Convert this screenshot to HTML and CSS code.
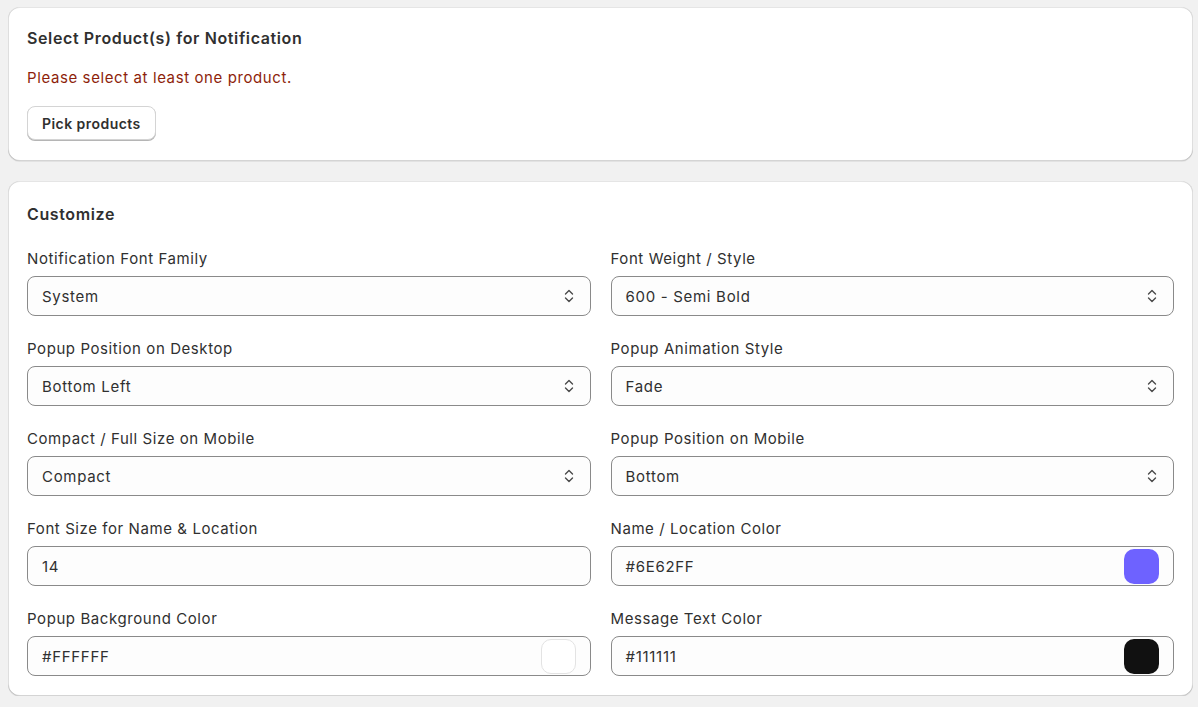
FILE: index.html
```html
<!DOCTYPE html>
<html>
<head>
<meta charset="utf-8">
<link rel="stylesheet" href="styles.css">
</head>
<body>
<div class="page">
  <section class="card">
    <h2 class="card-title">Select Product(s) for Notification</h2>
    <p class="error">Please select at least one product.</p>
    <button class="btn">Pick products</button>
  </section>
  <section class="card">
    <h2 class="card-title">Customize</h2>
    <div class="grid">
      <div class="field">
        <label class="label">Notification Font Family</label>
        <div class="input select"><span>System</span>
          <svg class="chev" viewBox="0 0 12 16" width="12" height="16"><path d="M2.5 6 L6 2.5 L9.5 6 M2.5 10 L6 13.5 L9.5 10" fill="none" stroke="#4a4a4a" stroke-width="1.4" stroke-linecap="round" stroke-linejoin="round"/></svg>
        </div>
      </div>
      <div class="field">
        <label class="label">Font Weight / Style</label>
        <div class="input select"><span>600 - Semi Bold</span>
          <svg class="chev" viewBox="0 0 12 16" width="12" height="16"><path d="M2.5 6 L6 2.5 L9.5 6 M2.5 10 L6 13.5 L9.5 10" fill="none" stroke="#4a4a4a" stroke-width="1.4" stroke-linecap="round" stroke-linejoin="round"/></svg>
        </div>
      </div>
      <div class="field">
        <label class="label">Popup Position on Desktop</label>
        <div class="input select"><span>Bottom Left</span>
          <svg class="chev" viewBox="0 0 12 16" width="12" height="16"><path d="M2.5 6 L6 2.5 L9.5 6 M2.5 10 L6 13.5 L9.5 10" fill="none" stroke="#4a4a4a" stroke-width="1.4" stroke-linecap="round" stroke-linejoin="round"/></svg>
        </div>
      </div>
      <div class="field">
        <label class="label">Popup Animation Style</label>
        <div class="input select"><span>Fade</span>
          <svg class="chev" viewBox="0 0 12 16" width="12" height="16"><path d="M2.5 6 L6 2.5 L9.5 6 M2.5 10 L6 13.5 L9.5 10" fill="none" stroke="#4a4a4a" stroke-width="1.4" stroke-linecap="round" stroke-linejoin="round"/></svg>
        </div>
      </div>
      <div class="field">
        <label class="label">Compact / Full Size on Mobile</label>
        <div class="input select"><span>Compact</span>
          <svg class="chev" viewBox="0 0 12 16" width="12" height="16"><path d="M2.5 6 L6 2.5 L9.5 6 M2.5 10 L6 13.5 L9.5 10" fill="none" stroke="#4a4a4a" stroke-width="1.4" stroke-linecap="round" stroke-linejoin="round"/></svg>
        </div>
      </div>
      <div class="field">
        <label class="label">Popup Position on Mobile</label>
        <div class="input select"><span>Bottom</span>
          <svg class="chev" viewBox="0 0 12 16" width="12" height="16"><path d="M2.5 6 L6 2.5 L9.5 6 M2.5 10 L6 13.5 L9.5 10" fill="none" stroke="#4a4a4a" stroke-width="1.4" stroke-linecap="round" stroke-linejoin="round"/></svg>
        </div>
      </div>
      <div class="field">
        <label class="label">Font Size for Name &amp; Location</label>
        <div class="input"><span>14</span></div>
      </div>
      <div class="field">
        <label class="label">Name / Location Color</label>
        <div class="input color"><span>#6E62FF</span><span class="swatch swatch-purple"></span></div>
      </div>
      <div class="field">
        <label class="label">Popup Background Color</label>
        <div class="input color"><span>#FFFFFF</span><span class="swatch swatch-white"></span></div>
      </div>
      <div class="field">
        <label class="label">Message Text Color</label>
        <div class="input color"><span>#111111</span><span class="swatch swatch-black"></span></div>
      </div>
    </div>
  </section>
</div>
</body>
</html>
```

FILE: styles.css
```css
* { box-sizing: border-box; }
html, body { margin: 0; padding: 0; }
body {
  background: #f1f1f1;
  font-family: Inter, "Noto Sans", sans-serif;
  color: #303030;
}
.page {
  padding: 7px 5px 0 8px;
  display: flex;
  flex-direction: column;
  gap: 20px;
}
.card {
  background: #fff;
  border-radius: 12px;
  padding: 20px 19px 21px 19px;
  box-shadow: 0 1px 0 0 rgba(26,26,26,0.07), 0 1px 0 0 rgba(204,204,204,0.5) inset, 0 -1px 0 0 rgba(0,0,0,0.17) inset, -1px 0 0 0 rgba(0,0,0,0.13) inset, 1px 0 0 0 rgba(0,0,0,0.13) inset;
}
.card + .card {
  padding-top: 22px;
  padding-bottom: 20px;
}
.card-title {
  margin: 0;
  font-size: 16px;
  line-height: 22px;
  font-weight: 600;
  letter-spacing: 0.62px;
  color: #303030;
}
.error {
  margin: 19px 0 0 0;
  font-size: 15px;
  line-height: 20px;
  letter-spacing: 0.6px;
  color: #8e1f0b;
}
.btn {
  margin-top: 18px;
  display: block;
  height: 34px;
  padding: 0 14px;
  border-radius: 8px;
  border: 1px solid #d4d4d4;
  background: #fff;
  font-family: inherit;
  font-size: 14px;
  font-weight: 600;
  letter-spacing: 0.45px;
  color: #303030;
  box-shadow: 0 1px 0 0 #b5b5b5;
}
.grid {
  margin-top: 24px;
  display: grid;
  grid-template-columns: 1fr 1fr;
  column-gap: 20px;
  row-gap: 23px;
}
.field {
  display: flex;
  flex-direction: column;
  gap: 7px;
}
.label {
  font-size: 15px;
  line-height: 20px;
  letter-spacing: 0.58px;
  color: #303030;
}
.input {
  height: 40px;
  border: 1px solid #8a8a8a;
  border-radius: 8px;
  background: #fdfdfd;
  display: flex;
  align-items: center;
  justify-content: space-between;
  padding: 0 13px 0 14px;
  font-size: 15px;
  letter-spacing: 0.7px;
  color: #303030;
}
.chev { display: block; margin-right: 2px; }
.swatch {
  width: 35px;
  height: 35px;
  border-radius: 10px;
  margin-right: 1px;
}
.swatch-purple { background: #6e62ff; }
.swatch-white { background: #fff; border: 1px solid #e3e3e3; }
.swatch-black { background: #111111; }
```
